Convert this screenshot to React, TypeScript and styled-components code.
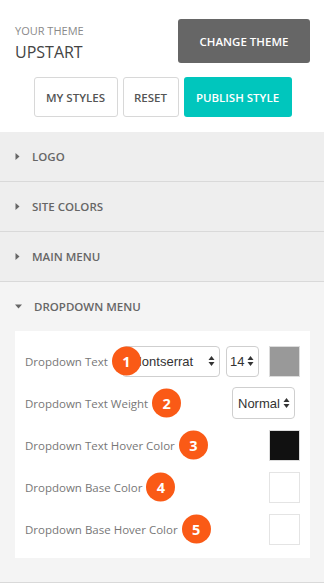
import React from "react";
import styled, { createGlobalStyle } from "styled-components";

const Global = createGlobalStyle`
  html, body { margin: 0; padding: 0; background: #ffffff; }
  body { font-family: "Open Sans", "Liberation Sans", Arial, sans-serif; width: 324px; }
  * { box-sizing: border-box; }
`;

const Page = styled.div`
  width: 324px;
  display: flex;
  flex-direction: column;
`;

const Header = styled.header`
  display: flex;
  flex-direction: column;
  padding: 19px 14px 15px 15px;
  gap: 14px;
`;

const TopRow = styled.div`
  display: flex;
  justify-content: space-between;
  align-items: flex-start;
`;

const ThemeInfo = styled.div`
  display: flex;
  flex-direction: column;
  padding-top: 4px;
`;

const ThemeCaption = styled.div`
  font-size: 11px;
  line-height: 15px;
  color: #8a8a8a;
  text-transform: uppercase;
`;

const ThemeName = styled.div`
  font-size: 16px;
  line-height: 21px;
  margin-top: 4px;
  color: #444;
  font-weight: 500;
`;

const Button = styled.button<{ $variant?: "dark" | "outline" | "teal"; $w: number }>`
  font-family: "Open Sans", "Liberation Sans", Arial, sans-serif;
  font-size: 11.5px;
  font-weight: 600;
  text-transform: uppercase;
  border-radius: 3px;
  cursor: pointer;
  display: flex;
  align-items: center;
  justify-content: center;
  padding: 0;
  width: ${(p) => p.$w}px;
  height: ${(p) => (p.$variant === "dark" ? "44px" : "40px")};
  background: ${(p) =>
    p.$variant === "dark" ? "#666666" : p.$variant === "teal" ? "#00c6bd" : "#ffffff"};
  color: ${(p) => (p.$variant === "outline" ? "#555" : "#ffffff")};
  border: 1px solid
    ${(p) => (p.$variant === "outline" ? "#d8d8d8" : "transparent")};
`;

const ButtonRow = styled.div`
  display: flex;
  justify-content: center;
  gap: 5px;
`;

const Accordion = styled.div`
  display: flex;
  flex-direction: column;
`;

const SectionHeader = styled.div<{ $open?: boolean }>`
  height: ${(p) => (p.$open ? "49px" : "50px")};
  display: flex;
  align-items: center;
  padding-left: 15px;
  gap: 12px;
  background: ${(p) => (p.$open ? "#f4f4f4" : "#eeeeee")};
  border-bottom: ${(p) => (p.$open ? "none" : "1px solid #d9d9d9")};
  font-size: 11.5px;
  font-weight: 600;
  color: #666;
  text-transform: uppercase;
  padding-bottom: 1px;
`;

const Open = styled.section`
  background: #f4f4f4;
  padding: 0 14px 24px 15px;
  border-bottom: 1px solid #d9d9d9;
  display: flex;
  flex-direction: column;
`;

const OpenHeader = styled(SectionHeader)`
  margin: 0 -14px 0 -15px;
`;

const Card = styled.div`
  background: #ffffff;
  padding: 9px 10px 8px 10px;
  display: flex;
  flex-direction: column;
`;

const Row = styled.div`
  height: 42px;
  display: flex;
  align-items: center;
  justify-content: space-between;
`;

const Label = styled.span`
  position: relative;
  font-size: 11.5px;
  color: #777;
  white-space: nowrap;
`;

const Badge = styled.span`
  position: absolute;
  left: calc(100% + 4px);
  top: 50%;
  transform: translateY(-50%);
  width: 29px;
  height: 29px;
  border-radius: 50%;
  background: #fa5a16;
  color: #fff;
  font-weight: 700;
  font-size: 14.5px;
  display: flex;
  align-items: center;
  justify-content: center;
  z-index: 2;
`;

const Controls = styled.div<{ $inset?: number }>`
  display: flex;
  align-items: center;
  gap: 6px;
  margin-right: ${(p) => p.$inset ?? 0}px;
`;

const Select = styled.div<{ $w: number; $h?: number; $pl: number; $pr: number }>`
  width: ${(p) => p.$w}px;
  height: ${(p) => p.$h ?? 31}px;
  border: 1px solid #cfcfcf;
  border-radius: 4px;
  background: #fff;
  display: flex;
  align-items: center;
  justify-content: space-between;
  padding: 0 ${(p) => p.$pr}px 0 ${(p) => p.$pl}px;
  font-family: "Liberation Sans", Arial, sans-serif;
  font-size: 13px;
  color: #333;
  overflow: hidden;
  white-space: nowrap;
`;

const Swatch = styled.div<{ $color: string }>`
  width: 31px;
  height: 31px;
  background: ${(p) => p.$color};
  border: 1px solid ${(p) => (p.$color === "#ffffff" ? "#e4e4e4" : "#dcdcdc")};
  margin-left: 4px;
`;

const Arrows = () => (
  <svg width="7" height="12" viewBox="0 0 7 12" style={{ flexShrink: 0 }}>
    <path d="M0.5 5 L3.5 1 L6.5 5 Z" fill="#333" />
    <path d="M0.5 7 L3.5 11 L6.5 7 Z" fill="#333" />
  </svg>
);

const Caret = ({ open }: { open?: boolean }) =>
  open ? (
    <svg width="7" height="5" viewBox="0 0 7 5">
      <path d="M0 0.5 L7 0.5 L3.5 4.5 Z" fill="#666" />
    </svg>
  ) : (
    <svg width="5" height="7" viewBox="0 0 5 7">
      <path d="M0.5 0 L4.5 3.5 L0.5 7 Z" fill="#666" />
    </svg>
  );

export default function App() {
  return (
    <Page>
      <Global />
      <Header>
        <TopRow>
          <ThemeInfo>
            <ThemeCaption>Your Theme</ThemeCaption>
            <ThemeName>UPSTART</ThemeName>
          </ThemeInfo>
          <Button $variant="dark" $w={132}>
            Change Theme
          </Button>
        </TopRow>
        <ButtonRow>
          <Button $variant="outline" $w={84}>
            My Styles
          </Button>
          <Button $variant="outline" $w={56}>
            Reset
          </Button>
          <Button $variant="teal" $w={108}>
            Publish Style
          </Button>
        </ButtonRow>
      </Header>
      <Accordion>
        {["Logo", "Site Colors", "Main Menu"].map((t) => (
          <SectionHeader key={t}>
            <Caret />
            {t}
          </SectionHeader>
        ))}
        <Open>
          <OpenHeader $open>
            <Caret open />
            Dropdown Menu
          </OpenHeader>
          <Card>
            <Row>
              <Label>
                Dropdown Text<Badge>1</Badge>
              </Label>
              <Controls>
                <Select $w={98} $pl={8} $pr={4}>
                  Montserrat
                  <Arrows />
                </Select>
                <Select $w={33} $pl={3} $pr={4}>
                  14
                  <Arrows />
                </Select>
                <Swatch $color="#999999" />
              </Controls>
            </Row>
            <Row>
              <Label>
                Dropdown Text Weight<Badge>2</Badge>
              </Label>
              <Controls $inset={5}>
                <Select $w={63} $h={32} $pl={5} $pr={4}>
                  Normal
                  <Arrows />
                </Select>
              </Controls>
            </Row>
            <Row>
              <Label>
                Dropdown Text Hover Color<Badge>3</Badge>
              </Label>
              <Controls>
                <Swatch $color="#111111" />
              </Controls>
            </Row>
            <Row>
              <Label>
                Dropdown Base Color<Badge>4</Badge>
              </Label>
              <Controls>
                <Swatch $color="#ffffff" />
              </Controls>
            </Row>
            <Row>
              <Label>
                Dropdown Base Hover Color<Badge>5</Badge>
              </Label>
              <Controls>
                <Swatch $color="#ffffff" />
              </Controls>
            </Row>
          </Card>
        </Open>
      </Accordion>
    </Page>
  );
}
